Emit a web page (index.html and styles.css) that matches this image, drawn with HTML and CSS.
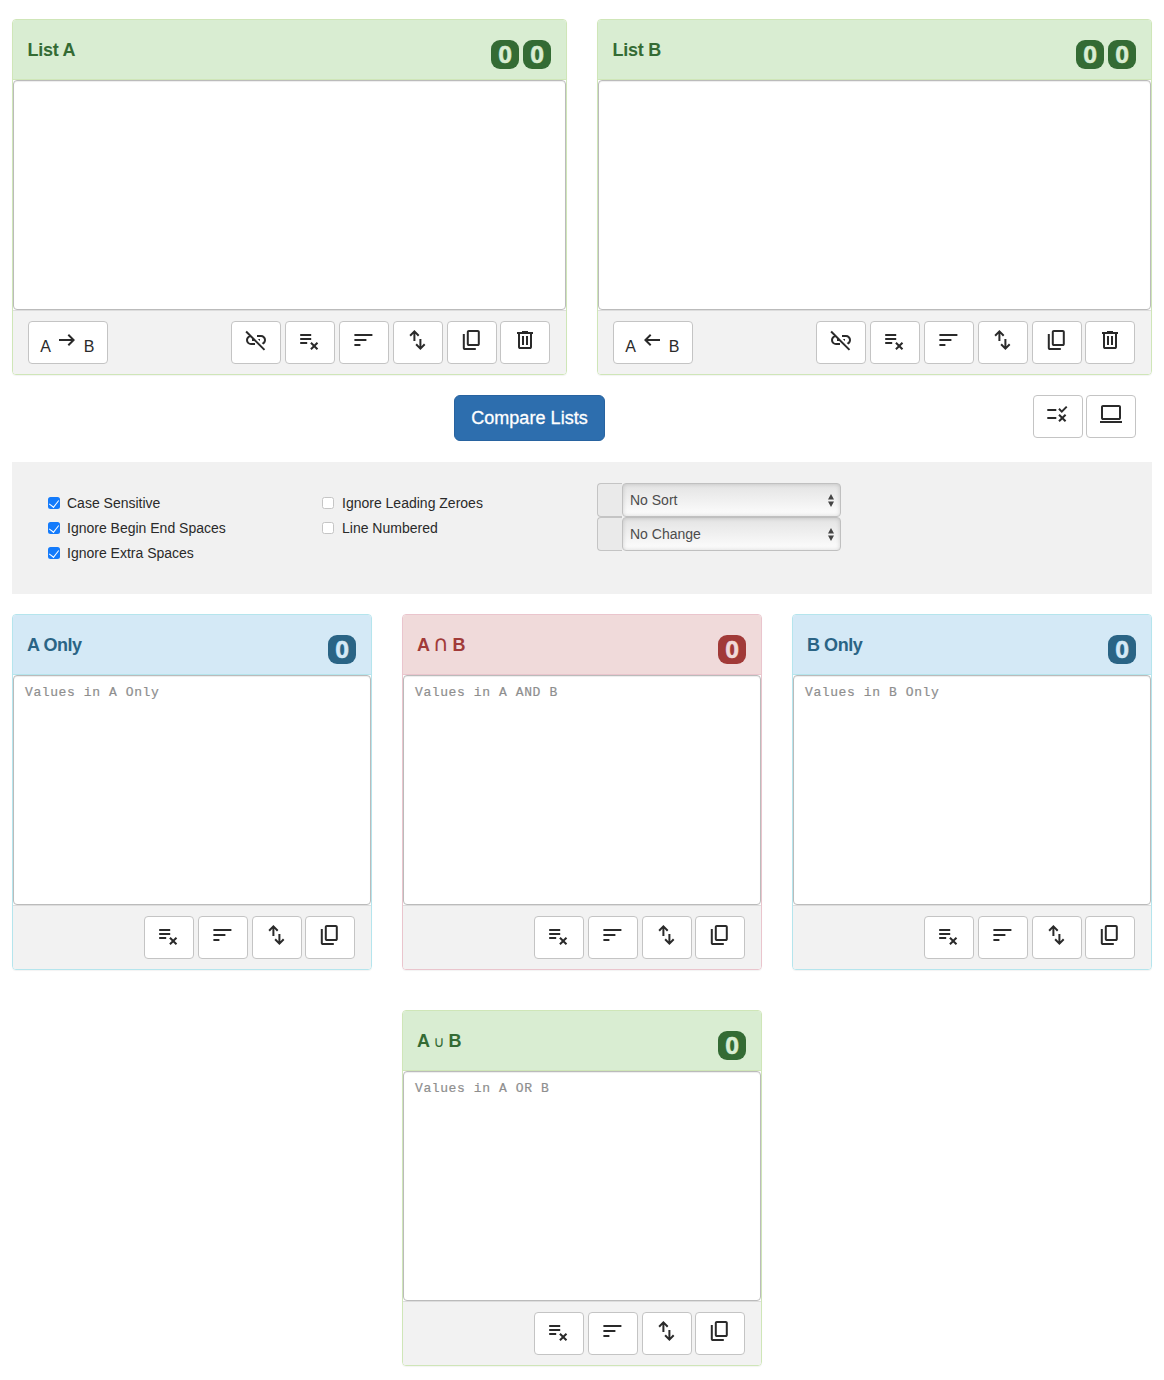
FILE: index.html
```html
<!DOCTYPE html>
<html lang="en">
<head>
<meta charset="utf-8">
<title>Compare Lists</title>
<link rel="stylesheet" href="styles.css">
</head>
<body>
<svg class="sprite" aria-hidden="true">
  <symbol id="unlink" viewBox="0 0 24 24"><path d="m19.25 16.45-1.5-1.55q.98-.27 1.6-1.07T20 12q0-1.25-.875-2.125T17 9h-4V7h4q2.075 0 3.538 1.462T22 12q0 1.425-.737 2.625T19.25 16.45ZM15.85 13l-2-2H16v2h-.15ZM19.8 22.6 1.4 4.2 2.8 2.8l18.4 18.4-1.4 1.4ZM11 17H7q-2.075 0-3.538-1.463T2 12q0-1.725 1.05-3.075T5.75 7.15L7.6 9H7q-1.25 0-2.125.875T4 12q0 1.25.875 2.125T7 15h4v2ZM8 13v-2h1.625l1.975 2H8Z"/></symbol>
  <symbol id="dedupe" viewBox="0.8 0 24 24"><path d="M14 10H3v2h11zm0-4H3v2h11zM3 16h7v-2H3zm11.41 6L17 19.41 19.59 22 21 20.59 18.41 18 21 15.41 19.59 14 17 16.59 14.41 14 13 15.41 15.59 18 13 20.59z"/></symbol>
  <symbol id="sort" viewBox="0.6 0 24 24"><path d="M3 18v-2h6v2zM3 6v2h18V6zm0 7v-2h12v2z"/></symbol>
  <symbol id="swap" viewBox="0.6 0 24 24"><path d="M8 13V5.825L5.425 8.4 4 7l5-5 5 5-1.425 1.4L10 5.825V13H8Zm7 9-5-5 1.425-1.4L14 18.175V11h2v7.175l2.575-2.575L20 17l-5 5Z"/></symbol>
  <symbol id="copy" viewBox="0.2 0 24 24"><path d="M9 18q-.825 0-1.412-.587T7 16V4q0-.825.587-1.412T9 2h9q.825 0 1.413.588T20 4v12q0 .825-.587 1.413T18 18H9Zm0-2h9V4H9v12Zm-4 6q-.825 0-1.413-.587T3 20V6h2v14h11v2H5Z"/></symbol>
  <symbol id="trash" viewBox="0 0 24 24"><path d="M7 21q-.825 0-1.412-.587T5 19V6H4V4h5V3h6v1h5v2h-1v13q0 .825-.587 1.413T17 21H7ZM17 6H7v13h10V6ZM9 17h2V8H9v9Zm4 0h2V8h-2v9Z"/></symbol>
  <symbol id="right" viewBox="0 0 24 24"><path d="m14 18-1.4-1.45L16.15 13H4v-2h12.15L12.6 7.45 14 6l6 6-6 6Z"/></symbol>
  <symbol id="left" viewBox="0 0 24 24"><path d="m10 18 1.4-1.45L7.85 13H20v-2H7.85l3.55-3.55L10 6l-6 6 6 6Z"/></symbol>
  <symbol id="rule" viewBox="0.7 0 24 24"><path d="m16.5 11-3.55-3.55 1.4-1.4 2.13 2.1 4.25-4.25 1.4 1.4zM11 7H2v2h9zm10 6.41L19.59 12 17 14.59 14.41 12 13 13.41 15.59 16 13 18.59 14.41 20 17 17.41 19.59 20 21 18.59 18.41 16zM11 15H2v2h9z"/></symbol>
  <symbol id="laptop" viewBox="0 0 24 24"><path d="M1 21v-2h22v2H1Zm3-3q-.825 0-1.412-.587T2 16V5q0-.825.587-1.412T4 3h16q.825 0 1.413.588T22 5v11q0 .825-.587 1.413T20 18H4Zm0-2h16V5H4v11Z"/></symbol>
</svg>

<main class="page">
  <div class="row two">
    <section class="panel green">
      <header class="head"><h3>List A</h3><div class="counts"><span class="badge">0</span><span class="badge">0</span></div></header>
      <textarea class="list"></textarea>
      <footer class="foot">
        <button class="btn move"><span>A</span><svg><use href="#right"/></svg><span>B</span></button>
        <div class="tools">
          <button class="btn"><svg><use href="#unlink"/></svg></button>
          <button class="btn"><svg><use href="#dedupe"/></svg></button>
          <button class="btn"><svg><use href="#sort"/></svg></button>
          <button class="btn"><svg><use href="#swap"/></svg></button>
          <button class="btn"><svg><use href="#copy"/></svg></button>
          <button class="btn"><svg><use href="#trash"/></svg></button>
        </div>
      </footer>
    </section>
    <section class="panel green">
      <header class="head"><h3>List B</h3><div class="counts"><span class="badge">0</span><span class="badge">0</span></div></header>
      <textarea class="list"></textarea>
      <footer class="foot">
        <button class="btn move"><span>A</span><svg><use href="#left"/></svg><span>B</span></button>
        <div class="tools">
          <button class="btn"><svg><use href="#unlink"/></svg></button>
          <button class="btn"><svg><use href="#dedupe"/></svg></button>
          <button class="btn"><svg><use href="#sort"/></svg></button>
          <button class="btn"><svg><use href="#swap"/></svg></button>
          <button class="btn"><svg><use href="#copy"/></svg></button>
          <button class="btn"><svg><use href="#trash"/></svg></button>
        </div>
      </footer>
    </section>
  </div>

  <div class="actions">
    <button class="compare">Compare Lists</button>
    <div class="tools">
      <button class="btn"><svg><use href="#rule"/></svg></button>
      <button class="btn"><svg><use href="#laptop"/></svg></button>
    </div>
  </div>

  <div class="options">
    <div class="checks">
      <label><input type="checkbox" checked><span>Case Sensitive</span></label>
      <label><input type="checkbox" checked><span>Ignore Begin End Spaces</span></label>
      <label><input type="checkbox" checked><span>Ignore Extra Spaces</span></label>
    </div>
    <div class="checks">
      <label><input type="checkbox"><span>Ignore Leading Zeroes</span></label>
      <label><input type="checkbox"><span>Line Numbered</span></label>
    </div>
    <div class="selects">
      <div class="group"><span class="addon"></span><div class="select"><span>No Sort</span><svg viewBox="0 0 6 13"><path d="M0 5.500 3 0l3 5.500zM0 7.500h6L3 13z"/></svg></div></div>
      <div class="group"><span class="addon"></span><div class="select"><span>No Change</span><svg viewBox="0 0 6 13"><path d="M0 5.500 3 0l3 5.500zM0 7.500h6L3 13z"/></svg></div></div>
    </div>
  </div>

  <div class="row three">
    <section class="panel blue">
      <header class="head"><h3>A Only</h3><div class="counts"><span class="badge">0</span></div></header>
      <textarea class="list" placeholder="Values in A Only"></textarea>
      <footer class="foot">
        <div class="tools">
          <button class="btn"><svg><use href="#dedupe"/></svg></button>
          <button class="btn"><svg><use href="#sort"/></svg></button>
          <button class="btn"><svg><use href="#swap"/></svg></button>
          <button class="btn"><svg><use href="#copy"/></svg></button>
        </div>
      </footer>
    </section>
    <section class="panel red">
      <header class="head"><h3>A <span class="cap">∩</span> B</h3><div class="counts"><span class="badge">0</span></div></header>
      <textarea class="list" placeholder="Values in A AND B"></textarea>
      <footer class="foot">
        <div class="tools">
          <button class="btn"><svg><use href="#dedupe"/></svg></button>
          <button class="btn"><svg><use href="#sort"/></svg></button>
          <button class="btn"><svg><use href="#swap"/></svg></button>
          <button class="btn"><svg><use href="#copy"/></svg></button>
        </div>
      </footer>
    </section>
    <section class="panel blue">
      <header class="head"><h3>B Only</h3><div class="counts"><span class="badge">0</span></div></header>
      <textarea class="list" placeholder="Values in B Only"></textarea>
      <footer class="foot">
        <div class="tools">
          <button class="btn"><svg><use href="#dedupe"/></svg></button>
          <button class="btn"><svg><use href="#sort"/></svg></button>
          <button class="btn"><svg><use href="#swap"/></svg></button>
          <button class="btn"><svg><use href="#copy"/></svg></button>
        </div>
      </footer>
    </section>
    <section class="panel green union">
      <header class="head"><h3>A <span class="cup">∪</span> B</h3><div class="counts"><span class="badge">0</span></div></header>
      <textarea class="list" placeholder="Values in A OR B"></textarea>
      <footer class="foot">
        <div class="tools">
          <button class="btn"><svg><use href="#dedupe"/></svg></button>
          <button class="btn"><svg><use href="#sort"/></svg></button>
          <button class="btn"><svg><use href="#swap"/></svg></button>
          <button class="btn"><svg><use href="#copy"/></svg></button>
        </div>
      </footer>
    </section>
  </div>
</main>
</body>
</html>
```
FILE: styles.css
```css
* { box-sizing: border-box; }
body {
  margin: 0;
  background: #fff;
  color: #2a2a2a;
  font-family: "Liberation Sans", Arial, sans-serif;
  font-size: 14px;
}
.sprite { display: none; }
.page { padding: 19px 12px 14px; }
.row { display: grid; }
.two { grid-template-columns: repeat(2, 1fr); gap: 30px; }
.three { grid-template-columns: repeat(3, 1fr); gap: 40px 30px; margin-top: 20px; }
.union { grid-column: 2; }

.panel {
  --tint: #d9edd2;
  --ink: #346b34;
  --edge: #cfe6b8;
  height: 356px;
  display: flex;
  flex-direction: column;
  border: 1px solid var(--edge);
  border-radius: 4px;
  box-shadow: 0 1px 1px rgba(0, 0, 0, .05);
}
.blue { --tint: #d4e9f6; --ink: #2a6485; --edge: #b5e5ed; }
.red { --tint: #f0dada; --ink: #a13a38; --edge: #eac5cd; }
.head {
  height: 60px;
  padding: 0 15px 0 14px;
  display: flex;
  justify-content: space-between;
  align-items: flex-start;
  background: var(--tint);
  border-bottom: 1px solid var(--edge);
  border-radius: 3px 3px 0 0;
  color: var(--ink);
}
h3 {
  margin: 0;
  padding-top: 20px;
  font-size: 18px;
  line-height: 20px;
  font-weight: 700;
  letter-spacing: -.45px;
}
.two h3 { padding-left: .5px; letter-spacing: -.25px; }
.cap, .cup { font-family: "DejaVu Sans", sans-serif; font-weight: 400; line-height: 0; }
.cap { margin: 0 -.6px; font-size: 22px; }
.cup { font-size: 15px; }
.counts { display: flex; gap: 4px; padding-top: 20px; }
.badge {
  width: 28px;
  height: 29px;
  border-radius: 9px;
  background: var(--ink);
  color: var(--tint);
  font: 700 24px/28px "Open Sans", sans-serif;
  -webkit-text-stroke: .4px var(--tint);
  text-align: center;
}
.list {
  display: block;
  width: 100%;
  height: 230px;
  padding: 8px 11px;
  border: 1px solid #bbb;
  border-radius: 4px;
  box-shadow: inset 0 1px 1px rgba(0, 0, 0, .075);
  resize: none;
  outline: 0;
  background: #fff;
  font: 13px/18px "Liberation Mono", monospace;
  letter-spacing: .6px;
}
.list::placeholder { color: #8e8e8e; opacity: 1; -webkit-text-stroke: .2px #8e8e8e; }
.foot {
  flex: 1;
  display: flex;
  align-items: flex-start;
  padding: 10px 16px 0 15px;
  border-top: 1px solid #ddd;
  border-radius: 0 0 3px 3px;
  background: #f2f2f2;
}
.tools { display: flex; gap: 4px; margin-left: auto; }
.tools .btn:last-child { margin-left: -1px; }
.btn {
  width: 50px;
  height: 43px;
  padding: 6px 0 0;
  display: flex;
  justify-content: center;
  align-items: flex-start;
  background: #fff;
  border: 1px solid #c4c4c4;
  border-radius: 4px;
  color: #2a2a2a;
  font: 16px/18px "Liberation Sans", Arial, sans-serif;
}
.btn svg { width: 24px; height: 24px; fill: currentColor; }
.move { width: 80px; padding-right: 1.4px; gap: 4.5px; }
.move span { padding-top: 10px; }

.actions { display: flex; height: 67px; margin-top: 20px; padding: 0 16px 0 442px; }
.compare {
  width: 151px;
  height: 46px;
  padding: 0;
  background: #2d6eae;
  border: 1px solid #2863a0;
  border-radius: 6px;
  color: #fff;
  font: 18px "Liberation Sans", Arial, sans-serif;
  letter-spacing: .05px;
  -webkit-text-stroke: .3px #fff;
}
.options {
  display: grid;
  grid-template-columns: 274px 275px 1fr;
  height: 132px;
  padding: 21px 36px 0;
  background: #f1f1f1;
}
.checks { padding-top: 7px; }
.checks label { display: flex; align-items: center; height: 25px; white-space: nowrap; }
.checks input {
  appearance: none;
  flex: none;
  width: 12px;
  height: 12px;
  margin: 0 7px 0 0;
  border: 1px solid #c5c5c5;
  border-radius: 2.5px;
  background: #fff;
}
.checks + .checks input { margin-right: 8px; }
.checks input:checked {
  display: grid;
  justify-content: center;
  border: 0;
  background: #147bfb;
}
.checks input:checked::before {
  content: "";
  width: 5px;
  height: 8px;
  margin-top: 1px;
  border: solid #fff;
  border-width: 0 1.6px 1.6px 0;
  transform: rotate(38deg);
}
.selects { width: 244px; }
.group { display: flex; height: 34px; }
.addon {
  width: 25px;
  border: 1px solid #c4c4c4;
  border-right: 0;
  border-radius: 4px 0 0 4px;
  background: #eaeaea;
}
.select {
  flex: 1;
  display: flex;
  align-items: center;
  justify-content: space-between;
  padding: 0 6px 0 7px;
  border: 1px solid #c0c0c0;
  border-radius: 4px;
  background: linear-gradient(#e3e3e3, #fdfdfd);
  box-shadow: inset 0 0 4px rgba(0, 0, 0, .16);
  color: #4c4c4c;
}
.select svg { width: 6px; height: 13px; fill: #444; }
```
